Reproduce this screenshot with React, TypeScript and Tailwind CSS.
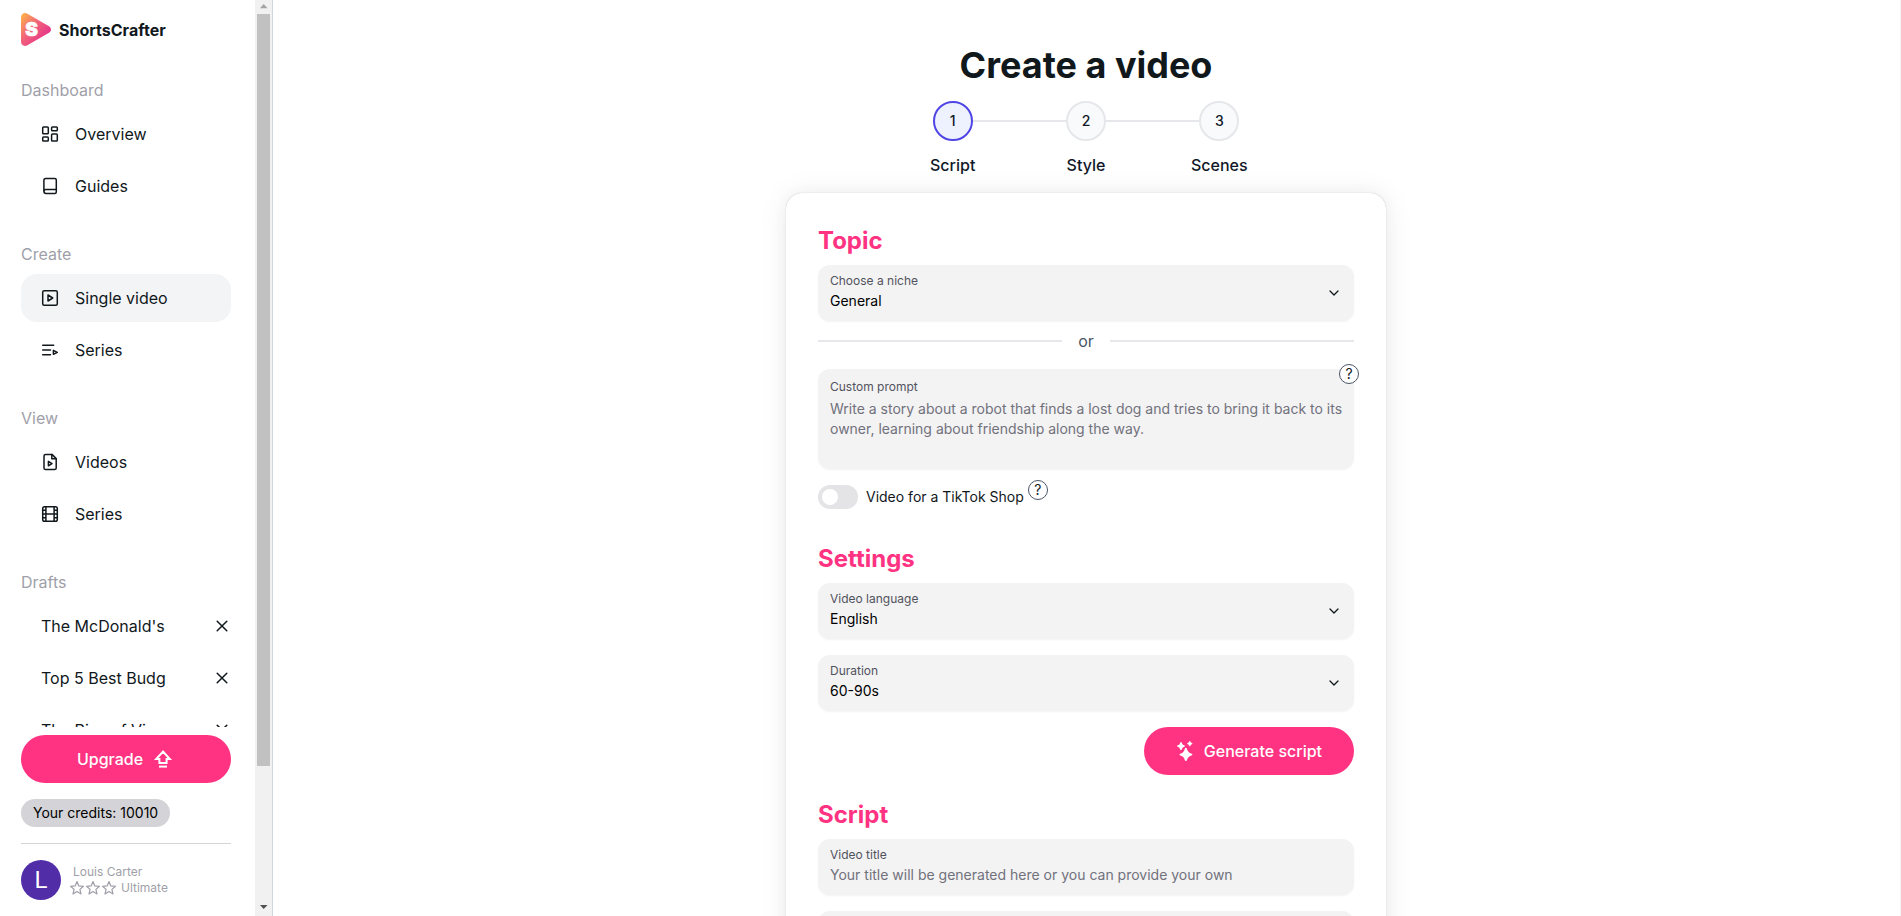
import clsx from 'clsx';
import React, { useState } from 'react';

interface IconProps {
  children: React.ReactNode;
  className?: string;
}

const Icon: React.FC<IconProps> = ({ children, className = 'size-[18px]' }) => (
  <svg
    viewBox="0 0 18 18"
    fill="none"
    stroke="currentColor"
    strokeWidth="1.5"
    strokeLinecap="round"
    strokeLinejoin="round"
    aria-hidden="true"
    className={clsx('shrink-0', className)}
  >
    {children}
  </svg>
);

const OverviewIcon = () => (
  <Icon>
    <rect x="1.7" y="1.9" width="5.6" height="6.9" rx="0.8" />
    <rect x="10.6" y="1.9" width="5.7" height="3.9" rx="0.8" />
    <rect x="1.7" y="12.1" width="5.6" height="3.9" rx="0.8" />
    <rect x="10.6" y="9.1" width="5.7" height="6.9" rx="0.8" />
  </Icon>
);

const GuidesIcon = () => (
  <Icon>
    <path d="M2.9 14.3V3.2c0-1 .8-1.8 1.8-1.8h9c.9 0 1.6.7 1.6 1.6v12c0 .8-.7 1.5-1.5 1.5H5c-1.2 0-2.1-.9-2.1-2.2Z" />
    <path d="M3 13.6c.4-.7 1-1 1.800-1H15.300" />
  </Icon>
);

const PlaySquareIcon = () => (
  <Icon>
    <rect x="1.7" y="1.7" width="14.6" height="14.6" rx="1.5" />
    <path d="M7 6v6l4.700-3Z" />
  </Icon>
);

const PlaylistIcon = () => (
  <Icon>
    <path d="M1.7 4.200h11M1.700 9h7.800M1.700 13.800h7.800" />
    <path d="M12.400 9.300v4l3.900-2Z" />
  </Icon>
);

const VideoFileIcon = () => (
  <Icon>
    <path d="M11 1.400H4.600c-.9 0-1.600.7-1.600 1.600v12c0 .9.700 1.600 1.600 1.600h9c.9 0 1.600-.7 1.600-1.600V5.600Z" />
    <path d="M10.800 1.600v4.200h4.300" />
    <path d="M7.400 8.300v4.500l3.600-2.200Z" />
  </Icon>
);

const FilmIcon = () => (
  <Icon>
    <rect x="1.7" y="1.7" width="14.6" height="14.6" rx="1.8" />
    <path d="M4.900 1.800v14.400M13.100 1.800v14.400M5 9h8M2 5.300h2.500M2 9h2.500M2 12.700h2.500M13.500 5.300H16M13.500 9H16M13.500 12.700H16" />
  </Icon>
);

const CloseIcon = () => (
  <Icon>
    <path d="m4.200 4.200 9.600 9.600M13.800 4.200l-9.600 9.600" />
  </Icon>
);

const Logo = () => (
  <svg viewBox="0 0 30 33" className="h-[33px] w-[30px]" aria-hidden="true">
    <defs>
      <linearGradient id="logo" x1="0" y1="0.1" x2="0.85" y2="0.9">
        <stop offset="0" stopColor="#fcae4b" />
        <stop offset="0.45" stopColor="#f2637a" />
        <stop offset="1" stopColor="#e22a8e" />
      </linearGradient>
    </defs>
    <path
      d="M0 4.500C0 1 3.300-1 6.400.7l21.200 12.200c3.200 1.900 3.200 5.300 0 7.200L6.400 32.300C3.300 34 0 32 0 28.500Z"
      fill="url(#logo)"
    />
    <text
      x="10.5"
      y="23"
      textAnchor="middle"
      fontFamily="Inter, sans-serif"
      fontWeight="900"
      fontSize="19"
      fill="#fff"
      stroke="#fff"
      strokeWidth="0.6"
    >
      S
    </text>
  </svg>
);

const SECTIONS = [
  {
    title: 'Dashboard',
    items: [
      { label: 'Overview', icon: OverviewIcon },
      { label: 'Guides', icon: GuidesIcon },
    ],
  },
  {
    title: 'Create',
    items: [
      { label: 'Single video', icon: PlaySquareIcon, active: true },
      { label: 'Series', icon: PlaylistIcon },
    ],
  },
  {
    title: 'View',
    items: [
      { label: 'Videos', icon: VideoFileIcon },
      { label: 'Series', icon: FilmIcon },
    ],
  },
];

const DRAFTS = ["The McDonald's", 'Top 5 Best Budg', 'The Rise of Vir'];

const STEPS = ['Script', 'Style', 'Scenes'];

const Sidebar = () => (
  <aside className="flex shrink-0 border-r border-gray-300">
    <div className="flex w-[255px] flex-col pr-6 pl-[21px]">
      <a href="#" className="mt-[13px] flex items-center gap-2 font-bold">
        <Logo />
        ShortsCrafter
      </a>

      <nav className="mt-8 flex min-h-0 flex-1 flex-col gap-8 overflow-y-auto [scrollbar-width:none]">
        {SECTIONS.map((section) => (
          <div key={section.title}>
            <h2 className="mb-2 text-zinc-400">{section.title}</h2>
            <ul className="flex flex-col gap-1">
              {section.items.map((item) => (
                <li key={item.label}>
                  <a
                    href="#"
                    className={clsx(
                      'flex h-12 items-center gap-4 rounded-2xl px-5',
                      'active' in item && item.active && 'bg-gray-100'
                    )}
                  >
                    <item.icon />
                    {item.label}
                  </a>
                </li>
              ))}
            </ul>
          </div>
        ))}

        <div>
          <h2 className="mb-2 text-zinc-400">Drafts</h2>
          <ul className="flex flex-col gap-1">
            {DRAFTS.map((draft) => (
              <li key={draft} className="flex h-12 items-center justify-between pl-5">
                <a href="#">{draft}</a>
                <button type="button" aria-label={`Delete ${draft}`}>
                  <CloseIcon />
                </button>
              </li>
            ))}
          </ul>
        </div>
      </nav>

      <button
        type="button"
        className="mt-2 flex h-12 shrink-0 items-center justify-center gap-2 rounded-full bg-[#ff3382] font-medium text-white"
      >
        Upgrade
        <svg
          viewBox="0 0 24 24"
          fill="none"
          stroke="currentColor"
          strokeWidth="2"
          aria-hidden="true"
          className="size-6"
        >
          <path d="M12 4.600 5.200 12H8.400v4h7.200v-4h3.200Z" />
          <path d="M8 19.600h8" />
        </svg>
      </button>

      <div className="mt-4 flex h-7 shrink-0 items-center self-start rounded-full bg-zinc-300 px-3 text-sm text-black">
        Your credits: 10010
      </div>

      <hr className="mt-4 border-zinc-300" />

      <div className="mt-4 mb-4 flex items-center">
        <div className="flex size-10 items-center justify-center rounded-full bg-[#512da8] font-[Roboto] text-2xl text-white">
          L
        </div>
        <div className="ml-2 text-xs text-zinc-400">
          <div className="pl-1">Louis Carter</div>
          <div className="flex items-center">
            {[0, 1, 2].map((i) => (
              <svg
                key={i}
                viewBox="0 0 16 16"
                fill="none"
                stroke="currentColor"
                strokeWidth="1.2"
                strokeLinejoin="round"
                aria-hidden="true"
                className="size-4"
              >
                <path d="m8 1.600 1.800 4.300 4.700.4-3.600 3.100 1.100 4.500L8 11.500l-4 2.400 1.100-4.500L1.500 6.300l4.700-.4Z" />
              </svg>
            ))}
            <span className="ml-1">Ultimate</span>
          </div>
        </div>
      </div>
    </div>

    {/* Scroll bar */}
    <div className="flex w-[17px] flex-col items-center bg-[#f1f1f1]" aria-hidden="true">
      <svg viewBox="0 0 17 14" className="h-3.5 w-full shrink-0">
        <path d="M5 8.300h7.500L8.700 4Z" fill="#a3a3a3" />
      </svg>
      <div className="w-[13px] flex-[752] bg-[#c1c1c1]" />
      <div className="flex-[133]" />
      <svg viewBox="0 0 17 17" className="h-[17px] w-full shrink-0">
        <path d="M5 6h7.500l-3.800 4Z" fill="#505050" />
      </svg>
    </div>
  </aside>
);

const Stepper = () => (
  <ol className="mt-4 grid w-full max-w-[400px] grid-cols-3">
    {STEPS.map((step, i) => (
      <li key={step} className="flex flex-col items-center gap-3 font-medium text-gray-900">
        <div className="flex w-full items-center">
          <span className={clsx('h-0.5 flex-1', i > 0 && 'bg-gray-200')} />
          <span
            className={clsx(
              'flex size-10 items-center justify-center rounded-full border-2 text-sm',
              i === 0 ? 'border-[#4f46e5] bg-indigo-50' : 'border-gray-200 bg-gray-50'
            )}
          >
            {i + 1}
          </span>
          <span className={clsx('h-0.5 flex-1', i < STEPS.length - 1 && 'bg-gray-200')} />
        </div>
        {step}
      </li>
    ))}
  </ol>
);

interface SelectFieldProps {
  id: string;
  label: string;
  options: string[];
}

const SelectField: React.FC<SelectFieldProps> = ({ id, label, options }) => (
  <div className="relative flex h-14 flex-col gap-0.5 rounded-xl bg-[#f3f3f4] px-3 pt-2 shadow-xs">
    <label htmlFor={id} className="text-xs text-zinc-600">
      {label}
    </label>
    <select id={id} className="h-5 appearance-none bg-transparent text-sm text-black outline-none">
      {options.map((option) => (
        <option key={option}>{option}</option>
      ))}
    </select>
    <svg
      viewBox="0 0 16 16"
      fill="none"
      stroke="currentColor"
      strokeWidth="1.3"
      strokeLinecap="round"
      strokeLinejoin="round"
      aria-hidden="true"
      className="pointer-events-none absolute top-5 right-3 size-4"
    >
      <path d="m4 6 4 4 4-4" />
    </svg>
  </div>
);

const HelpButton: React.FC<{ className?: string }> = ({ className }) => (
  <button
    type="button"
    aria-label="Help"
    className={clsx(
      'flex size-5 items-center justify-center rounded-full border border-gray-600 bg-white text-sm',
      className
    )}
  >
    ?
  </button>
);

const SectionTitle: React.FC<{ children: React.ReactNode }> = ({ children }) => (
  <h2 className="mb-2 text-2xl font-bold text-[#ff3382]">{children}</h2>
);

export default function App() {
  const [tiktokShop, setTiktokShop] = useState(false);

  return (
    <div className="flex h-screen overflow-hidden bg-white font-[Inter,sans-serif] text-base text-[#11181c]">
      <Sidebar />

      <main className="flex min-w-0 flex-1 flex-col items-center overflow-y-auto border-r border-zinc-100 pr-px [scrollbar-width:none]">
        <h1 className="mt-[45px] text-4xl font-bold">Create a video</h1>
        <Stepper />

        <form className="mt-4 w-full max-w-[600px] rounded-2xl bg-white p-8 shadow-[0_0_15px_0_rgba(0,0,0,0.03),0_2px_30px_0_rgba(0,0,0,0.08),0_0_1px_0_rgba(0,0,0,0.3)]">
          <section>
            <SectionTitle>Topic</SectionTitle>
            <SelectField id="niche" label="Choose a niche" options={['General']} />

            <div className="mt-2 mb-4 flex items-center gap-4 text-gray-600">
              <span className="h-0.5 flex-1 bg-gray-200" />
              or
              <span className="h-0.5 flex-1 bg-gray-200" />
            </div>

            <div className="relative flex h-[100px] flex-col gap-1 rounded-xl bg-[#f3f3f4] pt-2.5 pr-2 pl-3 shadow-xs">
              <label htmlFor="prompt" className="text-xs text-zinc-600">
                Custom prompt
              </label>
              <textarea
                id="prompt"
                rows={3}
                placeholder="Write a story about a robot that finds a lost dog and tries to bring it back to its owner, learning about friendship along the way."
                className="resize-none bg-transparent text-sm outline-none placeholder:text-zinc-500"
              />
              <HelpButton className="absolute -top-[5px] -right-[5px]" />
            </div>

            <div className="mt-4 flex h-[26px] items-start">
              <label className="flex items-center gap-2 text-sm">
                <input
                  type="checkbox"
                  role="switch"
                  checked={tiktokShop}
                  onChange={(e) => setTiktokShop(e.target.checked)}
                  className="peer sr-only"
                />
                <span className="flex h-6 w-10 items-center rounded-full bg-zinc-200 px-1 peer-checked:justify-end peer-checked:bg-[#ff3382]">
                  <span className="size-4 rounded-full bg-white" />
                </span>
                Video for a TikTok Shop
              </label>
              <HelpButton className="-mt-[5px] ml-1" />
            </div>
          </section>

          <section className="mt-8">
            <SectionTitle>Settings</SectionTitle>
            <div className="flex flex-col gap-4">
              <SelectField id="language" label="Video language" options={['English']} />
              <SelectField id="duration" label="Duration" options={['60-90s']} />
              <button
                type="button"
                className="flex h-12 items-center gap-2 self-end rounded-full bg-[#ff3382] px-8 font-medium text-white"
              >
                <svg viewBox="0 0 20 20" fill="currentColor" aria-hidden="true" className="size-5">
                  <path d="M9.800 6.700c.5 0 .8.300 1 .8.600 1.900 1.300 3 2 3.700.6.600 1.500 1.100 2.900 1.500.9.300.9 1.500 0 1.800-1.400.5-2.300.9-2.900 1.500-.7.700-1.400 1.700-1.900 3.300-.3.900-1.700.9-2 0-.5-1.600-1.100-2.600-1.800-3.300-.7-.6-1.500-1-2.900-1.500-.9-.3-.9-1.500 0-1.800 1.400-.4 2.200-.9 2.900-1.500.7-.7 1.300-1.800 1.800-3.700.1-.5.400-.8.900-.8Z" />
                  <path d="M5 1.100c.4 0 .6.200.8.600.5 1.500 1 2 2.500 2.600.8.300.8 1.200 0 1.500-1.500.5-2 1.100-2.500 2.600-.3.800-1.300.8-1.600 0-.5-1.500-1-2.100-2.500-2.600-.8-.3-.8-1.200 0-1.500 1.500-.6 2-1.100 2.500-2.600.2-.4.400-.6.800-.6Z" />
                  <path d="M13.800 0c.3 0 .5.200.6.500.3.800.6 1.100 1.500 1.500.7.200.7 1 0 1.300-.9.300-1.200.7-1.500 1.500-.2.700-1 .7-1.200 0-.4-.8-.7-1.200-1.500-1.500-.7-.3-.7-1.100 0-1.300.8-.4 1.100-.7 1.500-1.500.1-.3.300-.5.600-.5Z" />
                </svg>
                Generate script
              </button>
            </div>
          </section>

          <section className="mt-6">
            <SectionTitle>Script</SectionTitle>
            <div className="flex flex-col gap-4">
              <div className="flex h-14 flex-col gap-0.5 rounded-xl bg-[#f3f3f4] px-3 pt-2 shadow-xs">
                <label htmlFor="title" className="text-xs text-zinc-600">
                  Video title
                </label>
                <input
                  id="title"
                  placeholder="Your title will be generated here or you can provide your own"
                  className="h-5 bg-transparent text-sm outline-none placeholder:text-zinc-500"
                />
              </div>
              <textarea
                aria-label="Script"
                rows={6}
                className="resize-none rounded-xl bg-[#f3f3f4] px-3 py-2 text-sm shadow-xs outline-none"
              />
            </div>
          </section>
        </form>
      </main>
    </div>
  );
}
